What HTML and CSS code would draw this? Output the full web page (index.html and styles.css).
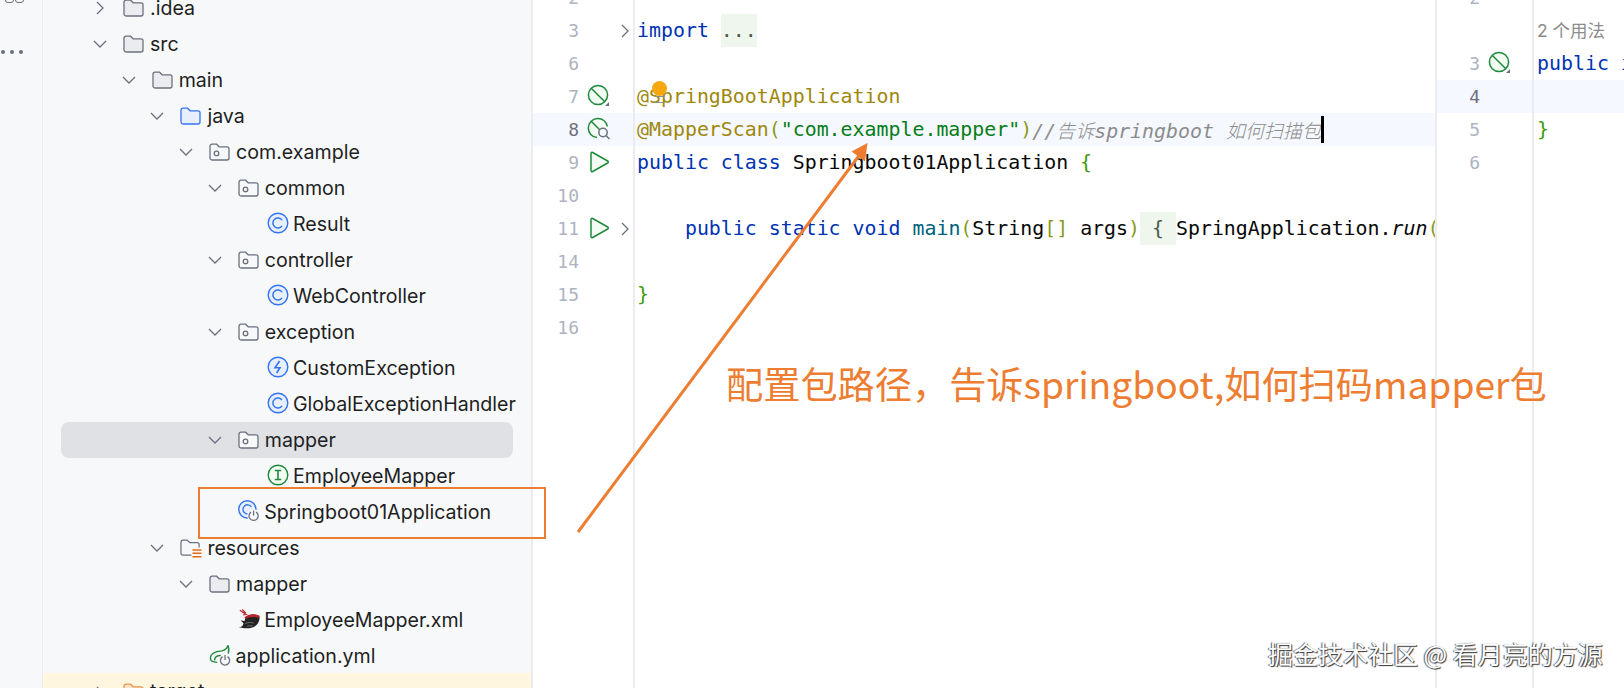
FILE: index.html
```html
<!DOCTYPE html>
<html lang="zh">
<head>
<meta charset="utf-8">
<title>Springboot01Application</title>
<link rel="stylesheet" href="styles.css">
</head>
<body>
<svg class="defs" width="0" height="0" aria-hidden="true">
  <symbol id="folder" viewBox="0 0 21 18"><path d="M1 3.2A2 2 0 0 1 3 1.2h4.6l2.6 2.6H18a2 2 0 0 1 2 2V15a2 2 0 0 1-2 2H3a2 2 0 0 1-2-2Z" fill="#ebecf0" stroke="#6c707e" stroke-width="1.3"/></symbol>
  <symbol id="src" viewBox="0 0 21 18"><path d="M1 3.2A2 2 0 0 1 3 1.2h4.6l2.6 2.6H18a2 2 0 0 1 2 2V15a2 2 0 0 1-2 2H3a2 2 0 0 1-2-2Z" fill="#e7effd" stroke="#3574f0" stroke-width="1.3"/></symbol>
  <symbol id="pkg" viewBox="0 0 21 18"><path d="M1 3.2A2 2 0 0 1 3 1.2h4.6l2.6 2.6H18a2 2 0 0 1 2 2V15a2 2 0 0 1-2 2H3a2 2 0 0 1-2-2Z" fill="#f7f8fa" stroke="#6c707e" stroke-width="1.3"/><circle cx="7.5" cy="10.4" r="2.3" fill="none" stroke="#6c707e" stroke-width="1.3"/></symbol>
  <symbol id="target" viewBox="0 0 21 18"><path d="M1 3.2A2 2 0 0 1 3 1.2h4.6l2.6 2.6H18a2 2 0 0 1 2 2V15a2 2 0 0 1-2 2H3a2 2 0 0 1-2-2Z" fill="#fbe3c8" stroke="#e8944f" stroke-width="1.3"/></symbol>
  <symbol id="res" viewBox="0 0 23 22"><path d="M12 17H3a2 2 0 0 1-2-2V3.2a2 2 0 0 1 2-2h4.6l2.6 2.6H18a2 2 0 0 1 2 2V9" fill="#f7f8fa" stroke="#6c707e" stroke-width="1.3"/><path d="M13 11.5h9.5M13 15h9.5M13 18.5h9.5" stroke="#e66d17" stroke-width="1.6"/></symbol>
  <symbol id="cls" viewBox="0 0 22 22"><circle cx="11" cy="11" r="9.8" fill="#e7effd" stroke="#3574f0" stroke-width="1.4"/><path d="M15 8.2A5 5 0 1 0 15 13.8" fill="none" stroke="#3574f0" stroke-width="1.5"/></symbol>
  <symbol id="exc" viewBox="0 0 22 22"><circle cx="11" cy="11" r="9.8" fill="#e7effd" stroke="#3574f0" stroke-width="1.4"/><path d="M12.6 5 8 11.8h5L9.6 17" fill="none" stroke="#3574f0" stroke-width="1.6"/></symbol>
  <symbol id="ifc" viewBox="0 0 22 22"><circle cx="11" cy="11" r="9.8" fill="#f2fcf3" stroke="#208a3c" stroke-width="1.4"/><path d="M7.8 6.5h6.4M7.8 15.5h6.4M11 6.5v9" fill="none" stroke="#208a3c" stroke-width="1.6"/></symbol>
  <symbol id="boot" viewBox="0 0 24 24"><circle cx="10.2" cy="10.2" r="9.4" fill="#e7effd" stroke="#3574f0" stroke-width="1.5"/><path d="M14.6 7.5A5 5 0 1 0 14.6 13" fill="none" stroke="#3574f0" stroke-width="1.5"/><circle cx="17" cy="17" r="7" fill="#f7f8fa"/><path d="M14.2 13.2a5 5 0 1 0 5.600 0" fill="none" stroke="#6c707e" stroke-width="1.4"/><path d="M17 11.500v5.500" stroke="#6c707e" stroke-width="1.4"/></symbol>
  <symbol id="yml" viewBox="0 0 24 24"><path d="M20.500 1.500C20 5 18 6.500 14 7.500 8 8 2 10 1.500 15c-.2 3 1.500 5 7.500 5" fill="none" stroke="#208a3c" stroke-width="1.500"/><path d="M20.500 1.500c1.500 3 1.500 6 .5 9M6 18c0-3.500 3-5.500 7-5.500" fill="none" stroke="#208a3c" stroke-width="1.500"/><circle cx="17.500" cy="17.500" r="6.800" fill="#f7f8fa"/><path d="M14.800 13.800a5 5 0 1 0 5.400 0" fill="none" stroke="#6c707e" stroke-width="1.400"/><path d="M17.500 12v5.500" stroke="#6c707e" stroke-width="1.400"/></symbol>
  <symbol id="bird" viewBox="0 0 24 22"><path d="M.5 20c3.500 0 5-1.500 5.500-4.500L3 12.500c1.500 0 3 .5 4 1C8 8.500 12 6 17 6c3 0 6 1 6.500 2.500.5 5-3 12-11 12.500-5 .3-8.500-.5-12-1Z" fill="#232224"/><path d="M7 9c4-3 10-4.500 16.500-1.500L23 10C17 8 12 8.500 8 11Z" fill="#b8242c"/><path d="M2 1.500 9 6l-3.500.5M4.500.5 8.500 4.500" fill="none" stroke="#c0272d" stroke-width="1.300"/><path d="M8 16c3-1.500 6-1.500 9-.5M10 19c2-.8 4-.8 6-.3" fill="none" stroke="#77777b" stroke-width="1"/></symbol>
  <symbol id="chev-r" viewBox="0 0 20 20"><path d="M7 4l6 6-6 6" fill="none" stroke="#6c707e" stroke-width="1.300"/></symbol>
  <symbol id="chev-d" viewBox="0 0 20 20"><path d="M4 7l6 6 6-6" fill="none" stroke="#6c707e" stroke-width="1.300"/></symbol>
  <symbol id="bean" viewBox="0 0 24 24"><circle cx="11" cy="11" r="9.600" fill="#f2fcf3" stroke="#208a3c" stroke-width="1.500"/><path d="M4.200 4.200l13.600 13.600" stroke="#208a3c" stroke-width="1.500"/><path d="M22 18v4h-4Z" fill="#6c707e"/></symbol>
  <symbol id="scan" viewBox="0 0 24 24"><path d="M20.400 9.500A9.600 9.600 0 1 0 10 20.600" fill="#f2fcf3" stroke="#208a3c" stroke-width="1.500"/><path d="M4.200 4.200 13 13" stroke="#208a3c" stroke-width="1.500"/><circle cx="16" cy="15.500" r="4.200" fill="#f5f8fe" stroke="#6c707e" stroke-width="1.500"/><path d="M19 18.500l3.500 3.500" stroke="#6c707e" stroke-width="1.500"/></symbol>
  <symbol id="run" viewBox="0 0 24 24"><path d="M4 3.500v17c0 1 .8 1.500 1.700 1l15-8.500c.8-.5.800-1.500 0-2l-15-8.500C4.800 2 4 2.500 4 3.500Z" fill="#f2fcf3" stroke="#208a3c" stroke-width="1.500"/></symbol>
</svg>

<main class="ide">
  <aside class="stripe">
    <div class="stripe-tools"><span class="tool"></span><span class="tool"></span></div>
    <div class="more"><i></i><i></i><i></i></div>
  </aside>

  <nav class="tree">
    <div class="row d0"><svg class="chev"><use href="#chev-r"/></svg><svg class="ic"><use href="#folder"/></svg><span>.idea</span></div>
    <div class="row d0"><svg class="chev"><use href="#chev-d"/></svg><svg class="ic"><use href="#folder"/></svg><span>src</span></div>
    <div class="row d1"><svg class="chev"><use href="#chev-d"/></svg><svg class="ic"><use href="#folder"/></svg><span>main</span></div>
    <div class="row d2"><svg class="chev"><use href="#chev-d"/></svg><svg class="ic"><use href="#src"/></svg><span>java</span></div>
    <div class="row d3"><svg class="chev"><use href="#chev-d"/></svg><svg class="ic"><use href="#pkg"/></svg><span>com.example</span></div>
    <div class="row d4"><svg class="chev"><use href="#chev-d"/></svg><svg class="ic"><use href="#pkg"/></svg><span>common</span></div>
    <div class="row d5"><span class="chev"></span><svg class="ic round"><use href="#cls"/></svg><span>Result</span></div>
    <div class="row d4"><svg class="chev"><use href="#chev-d"/></svg><svg class="ic"><use href="#pkg"/></svg><span>controller</span></div>
    <div class="row d5"><span class="chev"></span><svg class="ic round"><use href="#cls"/></svg><span>WebController</span></div>
    <div class="row d4"><svg class="chev"><use href="#chev-d"/></svg><svg class="ic"><use href="#pkg"/></svg><span>exception</span></div>
    <div class="row d5"><span class="chev"></span><svg class="ic round"><use href="#exc"/></svg><span>CustomException</span></div>
    <div class="row d5"><span class="chev"></span><svg class="ic round"><use href="#cls"/></svg><span>GlobalExceptionHandler</span></div>
    <div class="row d4 selected"><svg class="chev"><use href="#chev-d"/></svg><svg class="ic"><use href="#pkg"/></svg><span>mapper</span></div>
    <div class="row d5"><span class="chev"></span><svg class="ic round"><use href="#ifc"/></svg><span>EmployeeMapper</span></div>
    <div class="row d4"><span class="chev"></span><svg class="ic round"><use href="#boot"/></svg><span>Springboot01Application</span></div>
    <div class="row d2"><svg class="chev"><use href="#chev-d"/></svg><svg class="ic wide"><use href="#res"/></svg><span>resources</span></div>
    <div class="row d3"><svg class="chev"><use href="#chev-d"/></svg><svg class="ic"><use href="#folder"/></svg><span>mapper</span></div>
    <div class="row d4"><span class="chev"></span><svg class="ic round"><use href="#bird"/></svg><span>EmployeeMapper.xml</span></div>
    <div class="row d3"><span class="chev"></span><svg class="ic round"><use href="#yml"/></svg><span>application.yml</span></div>
    <div class="row d0 excluded"><svg class="chev"><use href="#chev-r"/></svg><svg class="ic"><use href="#target"/></svg><span>target</span></div>
  </nav>

  <section class="pane main-pane">
    <div class="gutter">
      <div class="gl"><span class="ln">2</span><span class="gi"></span><span class="fo"></span></div>
      <div class="gl"><span class="ln">3</span><span class="gi"></span><svg class="fo"><use href="#chev-r"/></svg></div>
      <div class="gl"><span class="ln">6</span><span class="gi"></span><span class="fo"></span></div>
      <div class="gl"><span class="ln">7</span><svg class="gi"><use href="#bean"/></svg><span class="fo"></span></div>
      <div class="gl current"><span class="ln">8</span><svg class="gi"><use href="#scan"/></svg><span class="fo"></span></div>
      <div class="gl"><span class="ln">9</span><svg class="gi"><use href="#run"/></svg><span class="fo"></span></div>
      <div class="gl"><span class="ln">10</span><span class="gi"></span><span class="fo"></span></div>
      <div class="gl"><span class="ln">11</span><svg class="gi"><use href="#run"/></svg><svg class="fo"><use href="#chev-r"/></svg></div>
      <div class="gl"><span class="ln">14</span><span class="gi"></span><span class="fo"></span></div>
      <div class="gl"><span class="ln">15</span><span class="gi"></span><span class="fo"></span></div>
      <div class="gl"><span class="ln">16</span><span class="gi"></span><span class="fo"></span></div>
    </div>
    <div class="code">
      <div class="cl"></div>
      <div class="cl"><span class="kw">import</span> <span class="folded">...</span></div>
      <div class="cl"></div>
      <div class="cl"><span class="an">@SpringBootApplication</span></div>
      <div class="cl current"><span class="an">@MapperScan</span><span class="br">(</span><span class="st">"com.example.mapper"</span><span class="br">)</span><span class="cm">//<span class="cjk">告诉</span>springboot <span class="cjk">如何扫描包</span></span><span class="caret"></span></div>
      <div class="cl"><span class="kw">public class</span> Springboot01Application <span class="brg">{</span></div>
      <div class="cl"></div>
      <div class="cl">    <span class="kw">public static void</span> <span class="fn">main</span><span class="br">(</span>String<span class="br">[]</span> args<span class="br">)</span><span class="folded"> { </span>SpringApplication.<em>run</em><span class="br">(</span></div>
      <div class="cl"></div>
      <div class="cl"><span class="brg">}</span></div>
      <div class="cl"></div>
    </div>
  </section>

  <section class="pane side-pane">
    <div class="gutter">
      <div class="gl"><span class="ln">2</span><span class="gi"></span></div>
      <div class="gl"></div>
      <div class="gl"><span class="ln">3</span><svg class="gi"><use href="#bean"/></svg></div>
      <div class="gl current"><span class="ln">4</span><span class="gi"></span></div>
      <div class="gl"><span class="ln">5</span><span class="gi"></span></div>
      <div class="gl"><span class="ln">6</span><span class="gi"></span></div>
    </div>
    <div class="code">
      <div class="cl"></div>
      <div class="cl usage">2 个用法</div>
      <div class="cl"><span class="kw">public interface</span></div>
      <div class="cl current"></div>
      <div class="cl"><span class="brg">}</span></div>
      <div class="cl"></div>
    </div>
  </section>
</main>

<div class="bulb"></div>
<div class="callout-box"></div>
<svg class="arrow" width="1624" height="688" viewBox="0 0 1624 688" aria-hidden="true">
  <path d="M578 532 861 153" fill="none" stroke="#ed7d31" stroke-width="3"/>
  <path d="M867.500 143 865 161.500 851.500 151.500Z" fill="#ed7d31"/>
</svg>
<p class="note">配置包路径，告诉springboot,如何扫码mapper包</p>
<p class="watermark">掘金技术社区 @ 看月亮的方源</p>
</body>
</html>
```
FILE: styles.css
```css
* { box-sizing: border-box; }
html, body { margin: 0; height: 688px; overflow: hidden; background: #fff; }
.defs { position: absolute; }

.ide { display: flex; width: 1624px; height: 688px; overflow: hidden; }

/* tool stripe */
.stripe { width: 43px; flex: none; background: #f7f8fa; border-right: 1.5px solid #ebecf0; }
.stripe-tools { display: flex; gap: 1px; margin: -17px 0 0 5px; height: 20px; }
.tool { width: 9px; height: 20px; border: 1.5px solid #6c707e; border-radius: 3px; }
.more { display: flex; gap: 5px; margin: 47px 0 0 1px; }
.more i { width: 4px; height: 4px; border-radius: 50%; background: #6c707e; }

/* project tree */
.tree {
  width: 490px; flex: none; background: #f7f8fa; border-right: 2px solid #ebecf0;
  margin-top: -10px; padding-bottom: 40px; height: 740px;
  font: 19.6px/36px Inter, "Noto Sans", sans-serif; color: #1e1f22;
}
.row { display: flex; align-items: center; height: 36px; white-space: nowrap; }
.d0 { padding-left: 47px; }
.d1 { padding-left: 75.7px; }
.d2 { padding-left: 104.4px; }
.d3 { padding-left: 133.1px; }
.d4 { padding-left: 161.8px; }
.d5 { padding-left: 190.5px; }
.chev { width: 20px; height: 20px; flex: none; margin-right: 13px; }
.ic { width: 21px; height: 18px; flex: none; margin-right: 6px; }
.ic.round { width: 22px; height: 22px; margin-top: -2px; margin-right: 4.5px; }
.ic.wide { width: 22px; height: 21px; margin-right: 5px; margin-top: 3px; }
.selected { background: #dfe1e5; border-radius: 8px; margin: 0 18px; padding-left: 143.8px; }
.excluded { background: #fff6e0; height: 41px; margin-top: -1px; padding-top: 1px; align-items: flex-start; }
.excluded .chev, .excluded .ic { margin-top: 9px; }
.excluded span { margin-top: -1px; }

/* editor panes */
.pane { display: flex; flex: none; height: 740px; margin-top: -19px; font: 19.9px/33px "DejaVu Sans Mono", "Liberation Mono", "Noto Sans CJK SC", monospace; }
.main-pane { width: 904px; border-right: 2px solid #ebecf0; }
.side-pane { flex: 1; min-width: 0; }
.gutter { flex: none; border-right: 2px solid #ebecf0; }
.main-pane .gutter { width: 102px; }
.side-pane .gutter { width: 97px; }
.gl { display: flex; align-items: center; height: 33px; color: #aeb3c2; font-size: 18px; }
.gl.current { background: #f5f8fe; color: #6c707e; }
.ln { width: 46px; text-align: right; flex: none; }
.side-pane .ln { width: 43px; }
.gi { width: 24px; height: 24px; flex: none; margin-left: 8px; margin-top: -2px; }
.fo { width: 20px; height: 20px; flex: none; margin-left: 4px; }

.code { flex: 1; min-width: 0; overflow: hidden; color: #080808; }
.cl { height: 33px; padding-left: 3px; white-space: pre; }
.main-pane .cl { padding-left: 2px; }
.cl.current { background: #f5f8fe; display: flex; }
.cl.usage { font: 17.5px/33px Inter, "Noto Sans CJK SC", sans-serif; color: #8c8c8c; }
.kw { color: #0033b3; }
.an { color: #9e880d; }
.st { color: #067d17; }
.br { color: #8a9a22; }
.brg { color: #3d9a0c; }
.fn { color: #00627a; }
.cm { color: #8c8c8c; font-style: italic; }
.cjk { font-family: "Noto Sans CJK SC", sans-serif; font-size: 19px; font-weight: 300; }
.folded { display: inline-block; background: #eef6ee; color: #4a5a4a; }
em { font-style: italic; }
.caret { width: 3px; height: 27px; margin-top: 3px; background: #000; }

/* annotation layer */
.bulb { position: absolute; left: 652px; top: 81px; width: 15px; height: 15px; border-radius: 50%; background: #f5a80f; }
.bulb::after { content: ""; position: absolute; left: 3px; top: 15px; width: 9px; height: 5px; border-top: 1.5px solid #8c8c8c; border-bottom: 1.5px solid #8c8c8c; }
.callout-box { position: absolute; left: 198px; top: 487px; width: 348px; height: 52px; border: 2px solid #ed7d31; }
.arrow { position: absolute; left: 0; top: 0; }
.note { position: absolute; left: 726px; top: 358px; margin: 0; font: 37.2px/50px "Noto Sans CJK SC", sans-serif; color: #ed7d31; white-space: nowrap; }
.watermark { position: absolute; left: 1268px; top: 638px; margin: 0; font: 25px/30px "Noto Sans CJK SC", sans-serif; color: #fff; white-space: nowrap; text-shadow: 1px 1px 1px #333, -1px 0 1px #555; }
```
